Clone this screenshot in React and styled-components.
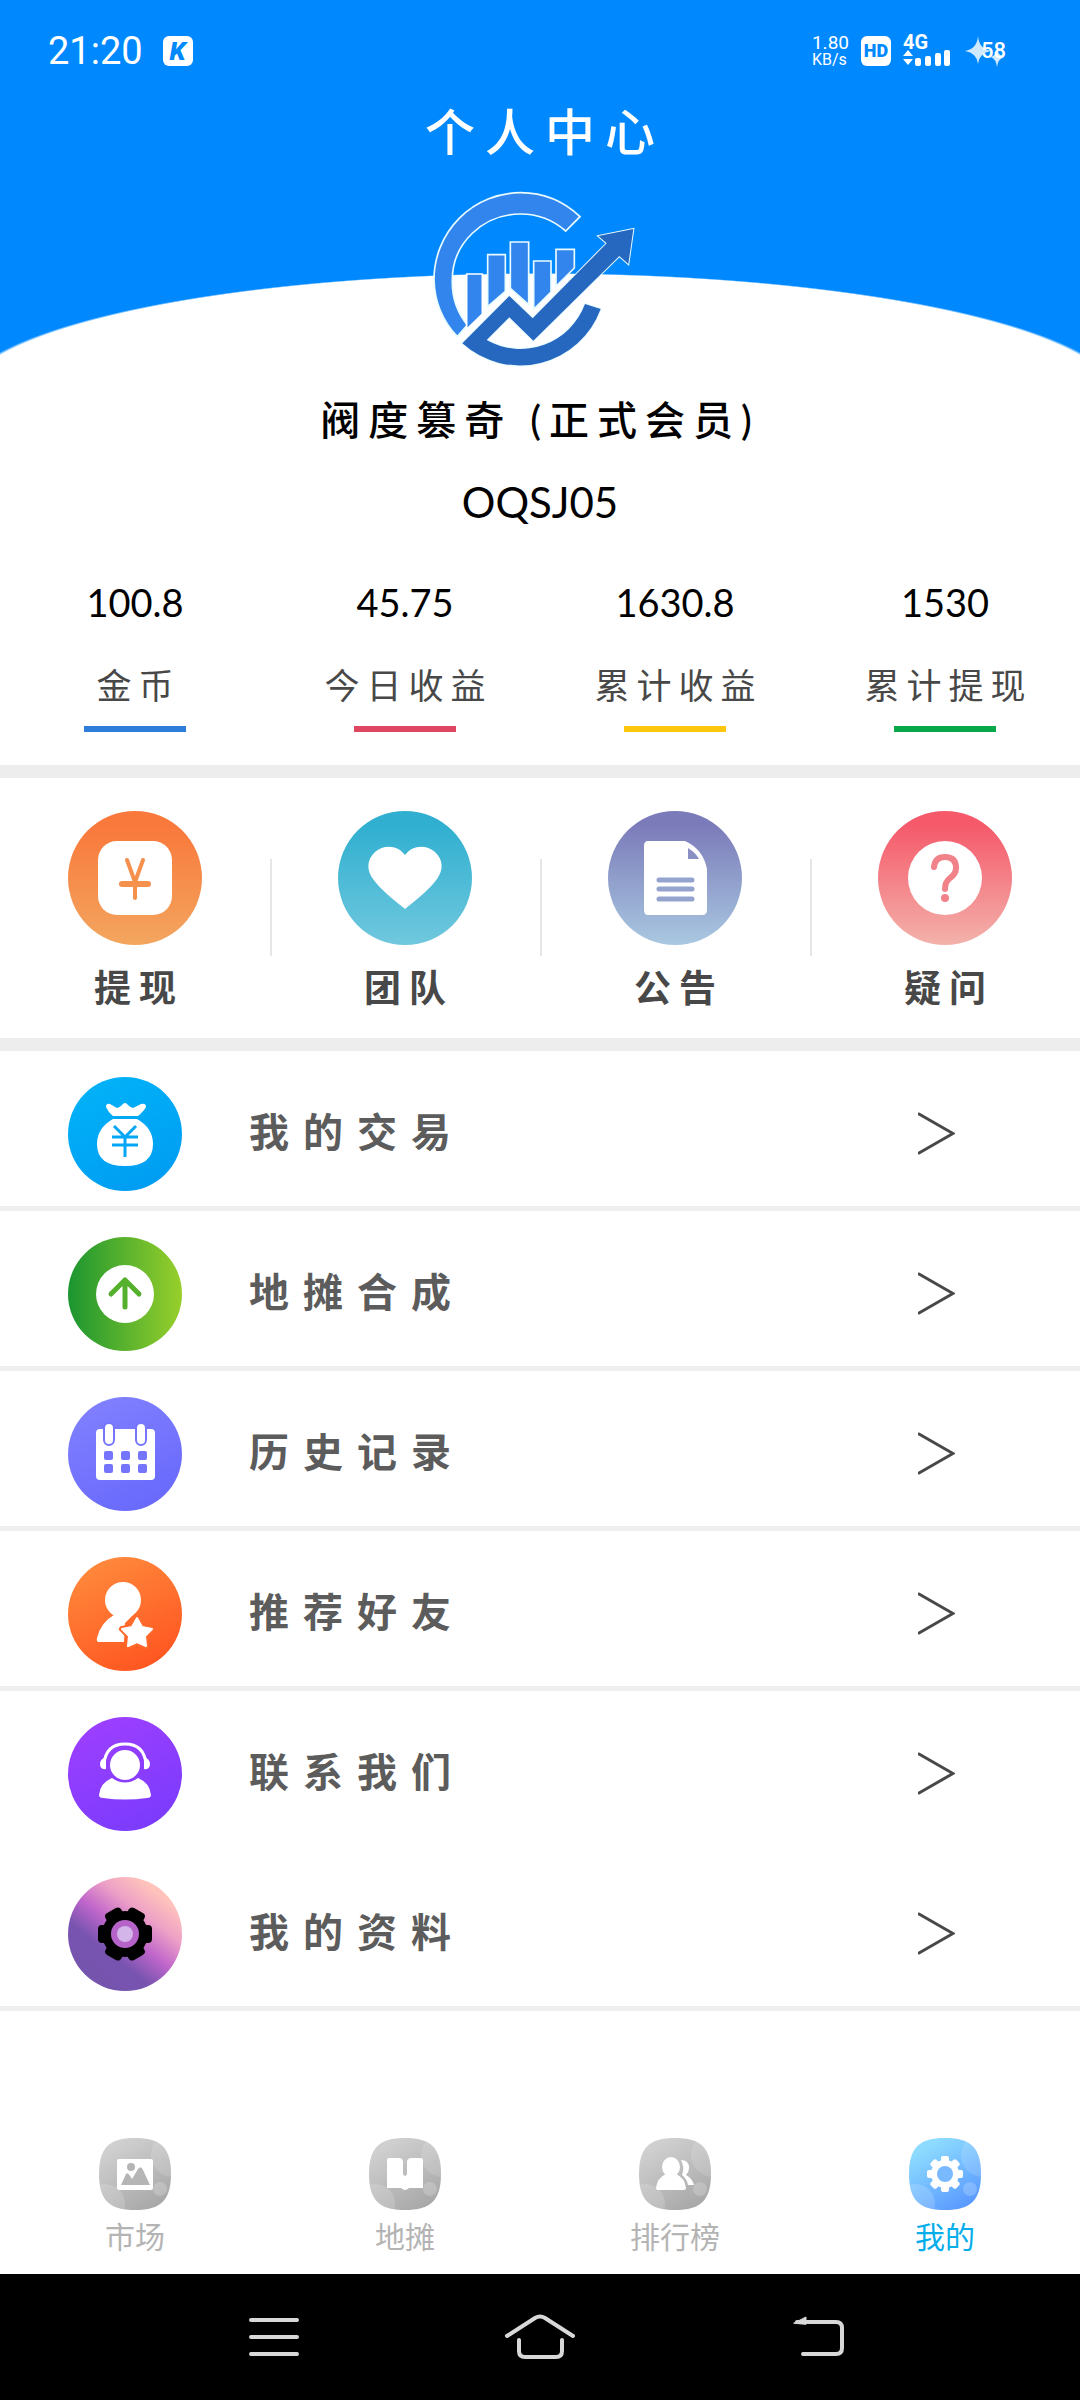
import React, { useState } from 'react';
import styled, { createGlobalStyle } from 'styled-components';

const GlobalStyle = createGlobalStyle`
  * {
    box-sizing: border-box;
  }

  body {
    margin: 0;
    background-color: #fff;
    font-family: Lato, 'Noto Sans CJK SC', sans-serif;
  }

  h1, h2, p, ul, dl, dd {
    margin: 0;
    padding: 0;
  }

  svg {
    display: block;
    flex-shrink: 0;
  }

  a {
    color: inherit;
    text-decoration: none;
  }

  button {
    padding: 0;
    border: none;
    background: none;
    font-family: inherit;
    cursor: pointer;
  }
`;

const Page = styled.div`
  display: flex;
  flex-direction: column;
  min-height: 100vh;
`;

const Hero = styled.header`
  display: flex;
  flex-direction: column;
  align-items: center;
  background: radial-gradient(54% 127px at 50% 400px, #fff 99%, #0089ff 100%) no-repeat;
  background-size: 100% 355px;
`;

const StatusBar = styled.div`
  display: flex;
  align-items: center;
  justify-content: space-between;
  width: 100%;
  height: 101px;
  padding: 0 74px 0 48px;
  color: #fff;
  font-family: Roboto, sans-serif;
`;

const StatusGroup = styled.div`
  display: flex;
  align-items: center;
  gap: ${(props) => props.$gap}px;
`;

const Clock = styled.time`
  font-size: 38px;
  line-height: 40px;
`;

const Badge = styled.span`
  width: 30px;
  height: 30px;
  border-radius: 6px;
  background-color: #fff;
  color: #0089ff;
  font-size: ${(props) => props.$size}px;
  font-style: ${(props) => (props.$italic ? 'italic' : 'normal')};
  font-weight: 900;
  line-height: 30px;
  text-align: center;
`;

const Speed = styled.span`
  display: flex;
  flex-direction: column;
  font-size: 19px;
  line-height: 17px;
`;

const SpeedUnit = styled.small`
  font-size: 16px;
`;

const Network = styled.span`
  display: flex;
  flex-direction: column;
  width: 47px;
  font-size: 20px;
  font-weight: 700;
  line-height: 15px;
`;

const Battery = styled.span`
  display: flex;
  align-items: center;
  font-size: 22px;
  font-weight: 500;
  line-height: 30px;
`;

const Title = styled.h1`
  color: #fff;
  font-size: 50px;
  font-weight: 500;
  line-height: 62px;
  letter-spacing: 10px;
  text-indent: 10px;
  margin-bottom: 17px;
`;

const Name = styled.h2`
  margin-top: 10px;
  color: #000;
  font-size: 40px;
  font-weight: 500;
  line-height: 60px;
  letter-spacing: 8px;
  text-align: center;
`;

const MemberCode = styled.p`
  margin-top: 22px;
  color: #000;
  font-size: 42px;
  line-height: 60px;
  text-align: center;
`;

const Stats = styled.dl`
  display: grid;
  grid-template-columns: repeat(4, 1fr);
  margin-top: 46px;
  padding-bottom: 33px;
`;

const Stat = styled.div`
  display: flex;
  flex-direction: column-reverse;
  align-items: center;

  &::before {
    content: '';
    width: 102px;
    height: 6px;
    margin-top: 17px;
    background-color: ${(props) => props.$color};
  }
`;

const StatLabel = styled.dt`
  margin-top: 35px;
  color: #484848;
  font-size: 35px;
  line-height: 48px;
  letter-spacing: 7px;
  text-indent: 7px;
  white-space: nowrap;
`;

const StatValue = styled.dd`
  color: #000;
  font-size: 38px;
  line-height: 48px;
`;

const Actions = styled.section`
  display: grid;
  grid-template-columns: repeat(4, 1fr);
  padding: 33px 0 25px;
  border-top: 13px solid #ededed;
  border-bottom: 13px solid #ededed;
`;

const ActionButton = styled.button`
  display: flex;
  flex-direction: column;
  align-items: center;
  gap: 18px;
  color: #484848;
  font-size: 37px;
  font-weight: 700;
  line-height: 50px;
  letter-spacing: 8px;
  text-indent: 8px;
  background: linear-gradient(#e6e6e6, #e6e6e6) no-repeat left 48px / 2px 97px;

  &:first-child {
    background: none;
  }
`;

const Menu = styled.ul`
  list-style: none;
`;

const MenuRow = styled.li`
  border-bottom: 5px solid ${(props) => (props.$plain ? '#fff' : '#efefef')};
`;

const MenuLink = styled.a`
  display: flex;
  align-items: center;
  gap: 67px;
  height: 155px;
  padding: 10px 125px 0 68px;
`;

const MenuLabel = styled.span`
  flex: 1;
  padding-bottom: 4px;
  color: #5c5c5c;
  font-size: 40px;
  font-weight: 700;
  line-height: 60px;
  letter-spacing: 14px;
`;

const TabBar = styled.nav`
  display: grid;
  grid-template-columns: repeat(4, 1fr);
  margin-top: auto;
  padding: 40px 0 18px;
`;

const Tab = styled.a`
  display: flex;
  flex-direction: column;
  align-items: center;
  gap: 6px;
  color: ${(props) => (props.$active ? '#05aeea' : '#b4b4b4')};
  font-size: 30px;
  line-height: 40px;
`;

const SystemBar = styled.div`
  display: grid;
  grid-template-columns: repeat(3, 1fr);
  justify-items: center;
  padding: 25px 13%;
  background-color: #000;
`;

const SystemButton = styled.button`
  height: 76px;
  display: flex;
  align-items: center;
`;

const Logo = () => (
  <svg width="240" height="200" viewBox="0 0 720 600" role="img" aria-label="logo">
    <g fill="#3385ee" stroke="#e8fbff" strokeWidth="5">
      <path d="M480 110A260 260 0 0 0 302 38A260 261 0 0 0 42 299A260 260 0 0 0 112 470L142 435A205 205 0 0 1 97 299A205 197 0 0 1 302 102A205 205 0 0 1 437 153Z" />
      <path d="M140 282H187V402L140 448Z" stroke="#fff" />
      <path d="M203 224H256V334L203 380Z" />
      <path d="M271 186H326V374L271 325Z" />
      <path d="M341 243H393V336L341 388Z" />
      <path d="M408 208H463V264L408 319Z" />
    </g>
    <path
      d="M127 490L268 348L338 415L560 190L535 168L640 147L625 252L598 228L340 482L268 412L200 480A206 206 0 0 0 495 372L542 387A258 258 0 0 1 127 490Z"
      fill="#2668bf"
      stroke="#e8fbff"
      strokeWidth="6"
      paintOrder="stroke"
    />
  </svg>
);

const SignalIcon = () => (
  <svg width="47" height="16" viewBox="0 0 47 16" fill="#fff">
    <path d="M0 6L5 0L10 6ZM0 9H10L5 15Z" />
    <rect x="12" y="8" width="6" height="8" rx="2" />
    <rect x="22" y="6" width="6" height="10" rx="2" />
    <rect x="32" y="3" width="6" height="13" rx="2" />
    <rect x="41" y="0" width="6" height="16" rx="2" />
  </svg>
);

const SparkIcon = () => (
  <svg width="19" height="30" viewBox="-3 0 19 30" overflow="visible">
    <path d="M13 0Q14 13 26 15Q14 17 13 28Q12 17 0 15Q12 13 13 0Z" fill="#cfeaff" />
    <path d="M32 12Q33 20 39 21Q33 23 32 31Q31 23 26 21Q31 20 32 12Z" fill="#cfeaff" />
  </svg>
);

const ActionIcon = ({ id, from, to, children }) => (
  <svg width="134" height="134" viewBox="0 0 134 134">
    <defs>
      <linearGradient id={id} gradientUnits="userSpaceOnUse" x1="0" y1="0" x2="0" y2="134">
        <stop offset="0.1" stopColor={from} />
        <stop offset="1" stopColor={to} />
      </linearGradient>
    </defs>
    <circle cx="67" cy="67" r="67" fill={`url(#${id})`} />
    {children}
  </svg>
);

const MenuIcon = ({ id, stops, vector = [30, 0, 84, 114], children }) => (
  <svg width="114" height="114" viewBox="0 0 114 114">
    <defs>
      <linearGradient
        id={id}
        gradientUnits="userSpaceOnUse"
        x1={vector[0]}
        y1={vector[1]}
        x2={vector[2]}
        y2={vector[3]}
      >
        {stops.map((color, i) => (
          <stop key={color} offset={i / (stops.length - 1)} stopColor={color} />
        ))}
      </linearGradient>
    </defs>
    <circle cx="57" cy="57" r="57" fill={`url(#${id})`} />
    {children}
  </svg>
);

const TabIcon = ({ id, colors, children }) => (
  <svg width="72" height="72" viewBox="0 0 72 72">
    <defs>
      <linearGradient id={id} x1="0.2" y1="0" x2="0.8" y2="1">
        <stop offset="0.1" stopColor={colors[0]} />
        <stop offset="1" stopColor={colors[1]} />
      </linearGradient>
      <clipPath id={`${id}-clip`}>
        <path d="M36 0C62 0 72 10 72 36S62 72 36 72S0 62 0 36S10 0 36 0Z" />
      </clipPath>
    </defs>
    <g clipPath={`url(#${id}-clip)`}>
      <rect width="72" height="72" fill={`url(#${id})`} />
      <circle cx="6" cy="66" r="20" fill="#fff" opacity="0.16" />
      <circle cx="74" cy="17" r="22" fill="#fff" opacity="0.14" />
      <circle cx="61" cy="51" r="7" fill="#fff" opacity="0.2" />
    </g>
    {children}
  </svg>
);

const ChevronIcon = () => (
  <svg width="37" height="43" viewBox="0 0 37 43" fill="none" stroke="#484848" strokeWidth="3">
    <path d="M1 2L35 21.5L1 41" strokeLinecap="round" />
  </svg>
);

const stats = [
  { label: '金币', value: '100.8', color: '#2e7ddb' },
  { label: '今日收益', value: '45.75', color: '#df4661' },
  { label: '累计收益', value: '1630.8', color: '#fbc60d' },
  { label: '累计提现', value: '1530', color: '#08a84a' },
];

const actions = [
  {
    label: '提现',
    icon: (
      <ActionIcon id="withdraw" from="#f9783b" to="#f3a65f">
        <rect x="30" y="30" width="74" height="74" rx="19" fill="#fff" />
        <path
          d="M59 49L67 71L75 49M67 71V87"
          fill="none"
          stroke="#f5904d"
          strokeWidth="4"
          strokeLinecap="round"
          strokeLinejoin="round"
        />
        <path d="M54 73H80" stroke="#f5904d" strokeWidth="6" strokeLinecap="round" />
      </ActionIcon>
    ),
  },
  {
    label: '团队',
    icon: (
      <ActionIcon id="team" from="#30afd0" to="#70c8de">
        <path
          d="M67 44C60 34 46 33 37 41C28 49 29 60 35 68C42 78 56 89 67 98C78 89 92 78 99 68C105 60 106 49 97 41C88 33 74 34 67 44Z"
          fill="#fff"
        />
      </ActionIcon>
    ),
  },
  {
    label: '公告',
    icon: (
      <ActionIcon id="notice" from="#7b7bb9" to="#a9c8e1">
        <path d="M40 30H77Q95 38 99 58V99Q99 104 94 104H40Q36 104 36 99V35Q36 30 40 30Z" fill="#fff" />
        <path d="M80 37Q88 42 91 48H80Z" fill="#8a90c4" />
        <path d="M51 69H84M51 78H84M51 88H84" stroke="#94a4cf" strokeWidth="5" strokeLinecap="round" />
      </ActionIcon>
    ),
  },
  {
    label: '疑问',
    icon: (
      <ActionIcon id="question" from="#f5596a" to="#f3b2ab">
        <circle cx="67" cy="67" r="37" fill="#fff" />
        <path
          d="M56 56Q57 46 67 46Q78 46 78 57Q78 63 72 67Q67 71 67 78"
          fill="none"
          stroke="#f1828a"
          strokeWidth="6"
          strokeLinecap="round"
        />
        <circle cx="67" cy="87" r="4" fill="#f1828a" />
      </ActionIcon>
    ),
  },
];

const menu = [
  {
    label: '我的交易',
    icon: (
      <MenuIcon id="trade" stops={['#02b2f8', '#009cf2']}>
        <path
          d="M38 30Q38 26 42 27L49 31Q51 31 54 28Q57 24 60 28Q63 31 65 31L73 27Q78 26 78 30Q76 34 70 39H45Q40 35 38 30Z"
          fill="#fff"
        />
        <path d="M45 42H69Q85 51 85 67Q85 89 57 89Q29 89 29 67Q29 51 45 42Z" fill="#fff" />
        <path d="M46 49L57 60L68 49M44 60H70M44 68H70M57 60V80" fill="none" stroke="#05a6f5" strokeWidth="3" />
      </MenuIcon>
    ),
  },
  {
    label: '地摊合成',
    icon: (
      <MenuIcon id="merge" stops={['#1b9530', '#98cf2b']} vector={[0, 57, 114, 57]}>
        <circle cx="57" cy="57" r="29" fill="#fff" />
        <path
          d="M57 44V70M43 57L57 43L71 57"
          fill="none"
          stroke="#54b02d"
          strokeWidth="5"
          strokeLinecap="round"
          strokeLinejoin="round"
        />
      </MenuIcon>
    ),
  },
  {
    label: '历史记录',
    icon: (
      <MenuIcon id="history" stops={['#8080ff', '#6868fc']}>
        <rect x="28" y="32" width="59" height="51" rx="4" fill="#fff" />
        {[41, 73].map((x) => (
          <rect
            key={x}
            x={x - 5}
            y="26"
            width="10"
            height="22"
            rx="5"
            fill="#fff"
            stroke="#7676fc"
            strokeWidth="2"
          />
        ))}
        {[40, 57, 74].map((x) =>
          [58, 71].map((y) => (
            <rect key={`${x}-${y}`} x={x - 4} y={y - 4} width="9" height="9" rx="2" fill="#7474fc" />
          ))
        )}
      </MenuIcon>
    ),
  },
  {
    label: '推荐好友',
    icon: (
      <MenuIcon id="invite" stops={['#ff8a3c', '#ff5420']}>
        <circle cx="55" cy="43" r="18" fill="#fff" />
        <path d="M46 58Q56 62 66 57L57 66L56 85H31Q28 85 29 81Q33 65 46 58Z" fill="#fff" />
        <path
          d="M69 61L74 70L84 72L77 79L78 89L69 85L60 89L61 79L54 72L64 70Z"
          fill="#fff"
          stroke="#ff692b"
          strokeWidth="6"
          strokeLinejoin="round"
          paintOrder="stroke"
        />
        <path
          d="M69 61L74 70L84 72L77 79L78 89L69 85L60 89L61 79L54 72L64 70Z"
          fill="#fff"
          stroke="#fff"
          strokeWidth="2"
          strokeLinejoin="round"
        />
      </MenuIcon>
    ),
  },
  {
    label: '联系我们',
    plain: true,
    icon: (
      <MenuIcon id="contact" stops={['#9d3fff', '#7a3bfc']}>
        <path d="M36 47Q38 27 57 27T78 47" fill="none" stroke="#fff" strokeWidth="3" />
        <path d="M38 40V52Q32 53 32 47Q32 42 38 40ZM76 40V52Q82 53 82 47Q82 42 76 40Z" fill="#fff" />
        <circle cx="57" cy="48" r="15" fill="#fff" />
        <path d="M44 61Q57 70 70 61Q82 66 83 78Q83 81 79 81Q57 84 35 81Q31 81 31 78Q32 66 44 61Z" fill="#fff" />
      </MenuIcon>
    ),
  },
  {
    label: '我的资料',
    icon: (
      <MenuIcon
        id="profile"
        stops={['#ffc3bb', '#eda0c6', '#c066cb', '#7854b0', '#7554ae']}
        vector={[88, 14, 24, 96]}
      >
        <circle cx="57" cy="57" r="23" />
        {[0, 60, 120].map((angle) => (
          <rect key={angle} x="30" y="48" width="54" height="18" rx="4" transform={`rotate(${angle} 57 57)`} />
        ))}
        <circle cx="57" cy="57" r="14" fill="#b563c9" />
        <circle cx="57" cy="57" r="8" fill="#d3b5ea" />
      </MenuIcon>
    ),
  },
];

const grey = ['#cfcfcf', '#a6a6a6'];

const tabs = [
  {
    label: '市场',
    icon: (
      <TabIcon id="market" colors={grey}>
        <rect x="18" y="21" width="36" height="31" rx="2" fill="#fff" />
        <circle cx="32" cy="29" r="4" fill="#b5b5b5" />
        <path d="M22 47L27 36Q29 34 31 38L33 41L39 31Q42 27 44 32L51 47Z" fill="#b5b5b5" />
      </TabIcon>
    ),
  },
  {
    label: '地摊',
    icon: (
      <TabIcon id="stall" colors={grey}>
        <path
          d="M18 22Q18 20 20 20H30Q33 20 34 23V36Q36 40 38 36V23Q39 20 42 20H52Q54 20 54 22V50H40Q36 54 32 50H18Z"
          fill="#fff"
        />
      </TabIcon>
    ),
  },
  {
    label: '排行榜',
    icon: (
      <TabIcon id="ranking" colors={grey}>
        <path d="M42 22Q50 22 50 30Q50 34 47 37Q53 40 55 47H49Q48 41 43 37Q46 30 42 22Z" fill="#fff" />
        <ellipse cx="32" cy="29" rx="9" ry="10" fill="#fff" />
        <path d="M27 36H37Q46 40 47 50Q47 52 45 52H19Q17 52 17 50Q18 40 27 36Z" fill="#fff" />
      </TabIcon>
    ),
  },
  {
    label: '我的',
    icon: (
      <TabIcon id="mine" colors={['#8ddcff', '#5796ff']}>
        {[0, 45, 90, 135].map((angle) => (
          <rect
            key={angle}
            x="18"
            y="32"
            width="36"
            height="8"
            rx="2"
            fill="#fff"
            transform={`rotate(${angle} 36 36)`}
          />
        ))}
        <circle cx="36" cy="36" r="14" fill="#fff" />
        <circle cx="36" cy="36" r="8" fill="#78b9ff" />
      </TabIcon>
    ),
  },
];

const App = () => {
  const [activeTab, setActiveTab] = useState('我的');

  return (
    <Page>
      <GlobalStyle />
      <Hero>
        <StatusBar>
          <StatusGroup $gap={20}>
            <Clock>21:20</Clock>
            <Badge $size={26} $italic>K</Badge>
          </StatusGroup>
          <StatusGroup $gap={12}>
            <Speed>
              1.80
              <SpeedUnit>KB/s</SpeedUnit>
            </Speed>
            <Badge $size={18}>HD</Badge>
            <Network>
              4G
              <SignalIcon />
            </Network>
            <Battery>
              <SparkIcon />
              58
            </Battery>
          </StatusGroup>
        </StatusBar>
        <Title>个人中心</Title>
        <Logo />
      </Hero>

      <Name>阀度篡奇 (正式会员)</Name>
      <MemberCode>OQSJ05</MemberCode>

      <Stats>
        {stats.map(({ label, value, color }) => (
          <Stat key={label} $color={color}>
            <StatLabel>{label}</StatLabel>
            <StatValue>{value}</StatValue>
          </Stat>
        ))}
      </Stats>

      <Actions>
        {actions.map(({ label, icon }) => (
          <ActionButton key={label} type="button">
            {icon}
            {label}
          </ActionButton>
        ))}
      </Actions>

      <Menu>
        {menu.map(({ label, icon, plain }) => (
          <MenuRow key={label} $plain={plain}>
            <MenuLink href="#">
              {icon}
              <MenuLabel>{label}</MenuLabel>
              <ChevronIcon />
            </MenuLink>
          </MenuRow>
        ))}
      </Menu>

      <TabBar>
        {tabs.map(({ label, icon }) => (
          <Tab key={label} href="#" $active={label === activeTab} onClick={() => setActiveTab(label)}>
            {icon}
            {label}
          </Tab>
        ))}
      </TabBar>

      <SystemBar>
        <SystemButton type="button" aria-label="menu">
          <svg width="52" height="44" viewBox="0 0 52 44" stroke="#d8d8d8" strokeWidth="4" strokeLinecap="round">
            <path d="M3 5H49M3 22H49M3 39H49" />
          </svg>
        </SystemButton>
        <SystemButton type="button" aria-label="home">
          <svg width="72" height="46" viewBox="0 0 72 46" fill="none" stroke="#d8d8d8" strokeWidth="4" strokeLinecap="round">
            <path d="M3 22L31 4Q36 1 41 4L69 22M15 26V37Q15 43 21 43H52Q58 43 58 37V26" />
          </svg>
        </SystemButton>
        <SystemButton type="button" aria-label="back">
          <svg width="78" height="44" viewBox="0 0 78 44" fill="none" stroke="#d8d8d8" strokeWidth="4" strokeLinecap="round">
            <path d="M30 7H69Q75 7 75 13V33Q75 39 69 39H36" />
            <path d="M27 8L39 2V9Z" fill="#d8d8d8" strokeWidth="1" />
          </svg>
        </SystemButton>
      </SystemBar>
    </Page>
  );
};

export default App;
